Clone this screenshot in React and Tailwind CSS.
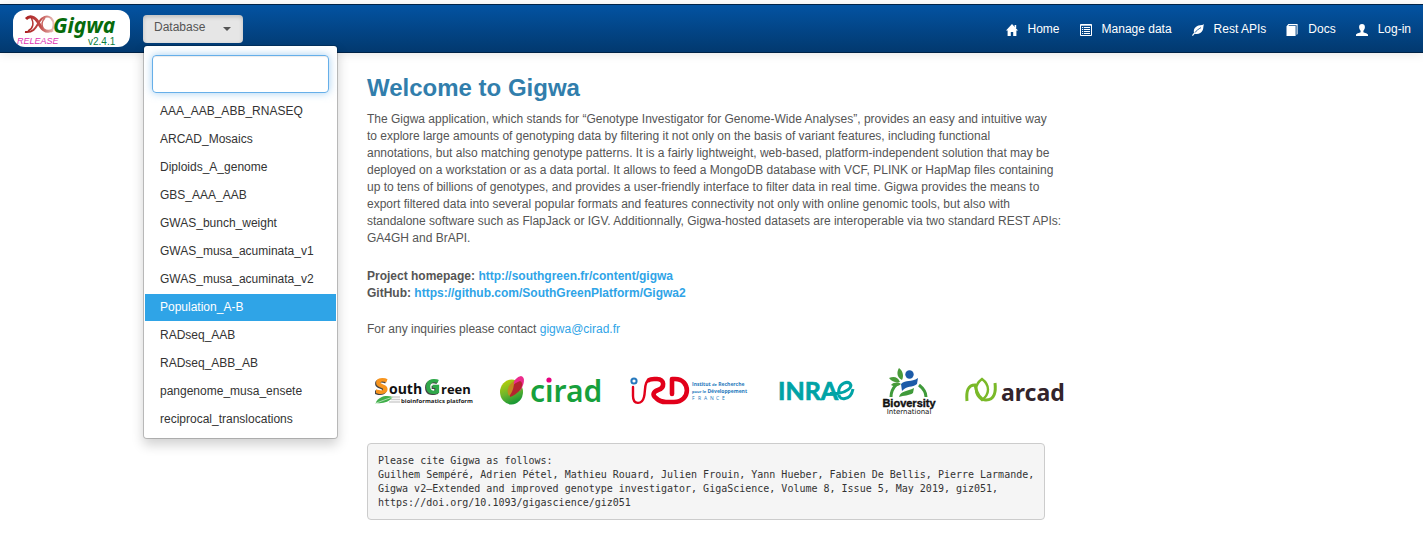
import React, { useState } from "react";

const DATABASES = [
  "AAA_AAB_ABB_RNASEQ",
  "ARCAD_Mosaics",
  "Diploids_A_genome",
  "GBS_AAA_AAB",
  "GWAS_bunch_weight",
  "GWAS_musa_acuminata_v1",
  "GWAS_musa_acuminata_v2",
  "Population_A-B",
  "RADseq_AAB",
  "RADseq_ABB_AB",
  "pangenome_musa_ensete",
  "reciprocal_translocations",
];

const HomeIcon = () => (
  <svg viewBox="0 0 12 12" className="size-3" fill="currentColor" aria-hidden="true">
    <path d="M6 0 L12 6.4 H10.4 V12 H7.2 V8 H4.8 V12 H1.6 V6.4 H0 Z" />
    <path d="M8.6 1 H10.2 V4 H8.6 Z" />
  </svg>
);

const ListIcon = () => (
  <svg viewBox="0 0 12 12" className="size-3" aria-hidden="true">
    <path d="M0.5 0.5 H11.5 V11.5 H0.5 Z M0.5 1.2 H11.5" fill="none" stroke="currentColor" />
    <path
      d="M2 3.5 H3.2 M4 3.5 H10 M2 5.5 H3.2 M4 5.5 H10 M2 7.5 H3.2 M4 7.5 H10 M2 9.5 H3.2 M4 9.5 H10"
      stroke="currentColor"
      fill="none"
    />
  </svg>
);

const LeafIcon = () => (
  <svg viewBox="0 0 12 12" className="size-3" aria-hidden="true">
    <path
      d="M12 0 C11 1.2 9 0.8 6.5 1.6 C3 2.8 1.3 5.4 2 8.8 C1.3 9.8 0.6 10.6 0 11.2 L0.9 11.9 C1.6 11.2 2.2 10.6 2.8 9.8 C6 10.4 9.4 9.6 10.8 6 C11.6 4 11.2 2 12 0 Z"
      fill="currentColor"
    />
    <path d="M3 8.6 C4.4 6.4 6.2 5.4 9 3.6" fill="none" stroke="#04478a" strokeWidth="0.8" />
  </svg>
);

const BookIcon = () => (
  <svg viewBox="0 0 12 12" className="size-3" aria-hidden="true">
    <path d="M0.5 2.2 L2.4 0 H11.6 V10 L10.6 11 V1.2 H3 L2.4 2 H9.6 V12 H0.5 Z" fill="currentColor" />
  </svg>
);

const UserIcon = () => (
  <svg viewBox="0 0 12 12" className="size-3" fill="currentColor" aria-hidden="true">
    <path d="M6 0 C7.9 0 8.9 1.3 8.9 3.1 C8.9 4.7 8.2 5.9 7.4 6.7 V8.2 C8.6 9 11.8 9.4 12 10.8 V12 H0 V10.8 C0.2 9.4 3.4 9 4.6 8.2 V6.7 C3.8 5.9 3.1 4.7 3.1 3.1 C3.1 1.3 4.1 0 6 0 Z" />
  </svg>
);

const NAV = [
  { label: "Home", Icon: HomeIcon },
  { label: "Manage data", Icon: ListIcon },
  { label: "Rest APIs", Icon: LeafIcon },
  { label: "Docs", Icon: BookIcon },
  { label: "Log-in", Icon: UserIcon },
];

const GigwaLogo = () => (
  <svg viewBox="0 0 117 37" className="h-[37px] w-[117px]" role="img" aria-label="Gigwa release v2.4.1">
    <defs>
      <linearGradient id="helix" gradientUnits="userSpaceOnUse" x1="12" x2="42" y1="0" y2="0">
        <stop offset="0" stopColor="#a81e1e" />
        <stop offset="0.5" stopColor="#c04a48" />
        <stop offset="1" stopColor="#ecc9c4" />
      </linearGradient>
    </defs>
    <g fill="none" stroke="url(#helix)">
      <path d="M13 9 C17 5 22 7 25 12 C28 18 32 24 40 20" strokeWidth="3" />
      <path d="M12 22 C21 23 23 17 26 12 C29 7 34 5 38 8 C42 12 41 18 38 22" strokeWidth="2" />
      <path d="M15 21 C21 18 21 13 18 7 M30 18 C28 14 29 11 32 8" strokeWidth="1.4" />
    </g>
    <text x="40" y="23" fontFamily="Noto Sans, sans-serif" fontSize="21" fontWeight="700" fontStyle="italic" fill="#066b0b">
      Gigwa
    </text>
    <text x="4" y="34" fontFamily="Liberation Sans, sans-serif" fontSize="9" fontStyle="italic" fill="#e032b0">
      RELEASE
    </text>
    <text x="75" y="35" fontFamily="Liberation Sans, sans-serif" fontSize="10" fill="#0a7d3c">
      v2.4.1
    </text>
  </svg>
);

const SouthGreenLogo = () => (
  <svg viewBox="0 0 99 30" className="h-[30px] w-[99px] overflow-visible" role="img" aria-label="SouthGreen bioinformatics platform">
    <g fontFamily="Open Sans, sans-serif" fontWeight="800" className="drop-shadow-[-1px_1px_0_#444]">
      <text x="1" y="18" fontSize="23" fill="#f7941d">S</text>
      <text x="51" y="18" fontSize="21" fill="#2fa84a">G</text>
    </g>
    <g fontFamily="Open Sans, sans-serif" fontWeight="700" fill="#111">
      <text x="15" y="18" fontSize="14">outh</text>
      <text x="67" y="18" fontSize="13">reen</text>
    </g>
    <path d="M2 26 C6 20 12 19 19 21 C15 26 9 28 2 27 Z" fill="#3fae49" />
    <path d="M1 27.5 C8 25 12 23 18 21.5" stroke="#c5e6c8" strokeWidth="0.8" fill="none" />
    <path d="M18 21 H26 M17 23.5 H26 M15 26 H26" stroke="#cfcfcf" strokeWidth="1.4" />
    <text x="27" y="27" fontFamily="Liberation Sans Narrow, Open Sans, sans-serif" fontSize="6" fontWeight="700" fill="#222">
      bioinformatics platform
    </text>
  </svg>
);

const CiradLogo = () => (
  <svg viewBox="0 0 102 30" className="h-[30px] w-[102px] overflow-visible" role="img" aria-label="cirad">
    <defs>
      <linearGradient id="fruit" x1="0" y1="0" x2="0.4" y2="1">
        <stop offset="0" stopColor="#c6d400" />
        <stop offset="0.6" stopColor="#6db52c" />
        <stop offset="1" stopColor="#1d9a35" />
      </linearGradient>
    </defs>
    <ellipse cx="11.5" cy="16" rx="11.5" ry="12.5" fill="url(#fruit)" />
    <path d="M13 8 C14 4 17 1 21 0 C26 1 24 9 20 15 Z" fill="#ec2b8c" />
    <path d="M10 21 C9 12 14 7 20 5 C25 7 21 17 10 21 Z" fill="#b5252f" />
    <path d="M9 20 C6 15 8 9 14 5 C14 10 13 16 9 20 Z" fill="#c28a1e" />
    <text x="30" y="26" fontFamily="Noto Sans, sans-serif" fontSize="30" fontWeight="600" fill="#17a03c">
      cırad
    </text>
    <circle cx="49" cy="4" r="2.6" fill="#e6007e" />
  </svg>
);

const IrdLogo = () => (
  <svg viewBox="0 0 121 30" className="h-[30px] w-[121px] overflow-visible" role="img" aria-label="IRD Institut de Recherche pour le Développement France">
    <circle cx="4" cy="5" r="2.6" fill="none" stroke="#2779bd" strokeWidth="2" />
    <g fill="none" stroke="#e2001a" strokeLinecap="round" strokeLinejoin="round">
      <path d="M3 11 V20 C3 29 12 29 14 21 C16 14 13 4 22 3" strokeWidth="2.4" />
      <path d="M19 4 C21 2.500 24 3 27 3 C35 3 35 12 28 14 C23 16 22 19 26 22 C29 25 31 26 36 26 H44 C61 26 61 3 45 3 H42 V18" strokeWidth="4.6" />
    </g>
    <g fontFamily="Open Sans, sans-serif" fill="#2779bd" fontWeight="700">
      <text x="62" y="10" fontSize="5">
        Institut <tspan fontSize="4">de</tspan> Recherche
      </text>
      <text x="62" y="17" fontSize="5">
        <tspan fontSize="4">pour le</tspan> Développement
      </text>
      {["F", "R", "A", "N", "C", "E"].map((letter, i) => (
        <text key={letter} x={62 + i * 6} y="24" fontSize="5" fontWeight="400">
          {letter}
        </text>
      ))}
    </g>
  </svg>
);

const InraeLogo = () => (
  <svg viewBox="0 0 77 24" className="h-6 w-[77px] overflow-visible" role="img" aria-label="INRAE">
    <text x="0" y="21" fontFamily="Lato, sans-serif" fontSize="25" fontWeight="700" fill="#00a3a6" stroke="#00a3a6" strokeWidth="0.7">
      INRA
    </text>
    <path
      d="M52 14.500 H60 C68 13.500 75 8.500 72 4.500 C69 2 62.500 4 61 10 C59.500 17 62 20.500 67 19.500 C71 19 74 15 75 10"
      fill="none"
      stroke="#00a3a6"
      strokeWidth="3"
    />
  </svg>
);

const BioversityLogo = () => (
  <svg viewBox="0 0 54 46" className="h-[46px] w-[54px] overflow-visible" role="img" aria-label="Bioversity International">
    <circle cx="26.5" cy="6.500" r="4.200" fill="#1c5ba8" />
    <path d="M19 12 C13 9 14 3 16 0 C20 3 21 8 19 12 Z M17 14 C13 15 9 14 6 10 C11 8 15 9 17 14 Z M18 16 C15 19 11 19 8 17 C11 14 15 14 18 16 Z" fill="#4a9b3a" />
    <path d="M18 16 C23 11 28 15 35 10 L34 16 C29 20 24 17 19 23 Z" fill="#1c5ba8" />
    <path d="M16 29 C18 22 24 24 31 20 L30 25 C26 28 21 27 16 29 Z" fill="#3f9a3a" />
    <path d="M13 17 C9 21 8 25 8 29 M36 17 C41 21 43 25 43 29" fill="none" stroke="#3f9a3a" strokeWidth="3" />
    <text x="26" y="39" textAnchor="middle" fontFamily="Liberation Sans, sans-serif" fontSize="11" fontWeight="700" fill="#111" stroke="#111" strokeWidth="0.4">
      Bioversity
    </text>
    <text x="26" y="46" textAnchor="middle" fontFamily="DejaVu Sans, sans-serif" fontSize="7" fill="#111">
      International
    </text>
  </svg>
);

const ArcadLogo = () => (
  <svg viewBox="0 0 97 28" className="h-7 w-[97px] overflow-visible" role="img" aria-label="arcad">
    <g fill="none" stroke="#7ab929" strokeWidth="3">
      <path d="M3 24 C2 14 4 8 11 8 C13 17 17 23 22 23 C31 23 32 14 31 6" />
      <path d="M18 2 C10 8 10 17 18 23 C26 17 26 8 18 2 Z" strokeWidth="2.4" />
    </g>
    <text x="37" y="24" fontFamily="Noto Sans, sans-serif" fontSize="23" fontWeight="700" fill="#33242b">
      arcad
    </text>
  </svg>
);

const INTRO = [
  "The Gigwa application, which stands for “Genotype Investigator for Genome-Wide Analyses”, provides an easy and intuitive way",
  "to explore large amounts of genotyping data by filtering it not only on the basis of variant features, including functional",
  "annotations, but also matching genotype patterns. It is a fairly lightweight, web-based, platform-independent solution that may be",
  "deployed on a workstation or as a data portal. It allows to feed a MongoDB database with VCF, PLINK or HapMap files containing",
  "up to tens of billions of genotypes, and provides a user-friendly interface to filter data in real time. Gigwa provides the means to",
  "export filtered data into several popular formats and features connectivity not only with online genomic tools, but also with",
  "standalone software such as FlapJack or IGV. Additionnally, Gigwa-hosted datasets are interoperable via two standard REST APIs:",
  "GA4GH and BrAPI.",
];

function Header({ selected, onSelect }) {
  const [query, setQuery] = useState("");
  return (
    <header className="flex h-[49px] items-center justify-between border-y border-[#002347] bg-linear-to-b from-[#0353a2] to-[#02396f] pr-3 pl-[13px] shadow-[0_1px_10px_rgba(0,0,0,0.1)]">
      <div className="flex items-center gap-[13px]">
        <a href="#home" className="rounded-xl bg-white">
          <GigwaLogo />
        </a>
        <div className="relative">
          <button
            type="button"
            aria-expanded="true"
            className="flex h-7 w-[100px] items-center justify-between rounded-sm bg-[#e6e6e6] px-[11px] pb-[3px] text-[#555] shadow-[inset_0_2px_4px_rgba(0,0,0,0.18)]"
          >
            Database
            <svg viewBox="0 0 8 4" className="mt-1 mr-px h-1 w-2" fill="#555" aria-hidden="true">
              <path d="M0 0 H8 L4 4 Z" />
            </svg>
          </button>
          <div className="absolute top-full left-0 z-10 mt-[2px] w-[195px] rounded-[4px] border border-black/20 bg-white bg-clip-padding pt-[9px] pb-1 shadow-[0_6px_12px_rgba(0,0,0,0.18)]">
            <div className="px-2 pb-[5px]">
              <input
                type="text"
                aria-label="Search databases"
                value={query}
                onChange={(e) => setQuery(e.target.value)}
                className="block h-[38px] w-full rounded-[4px] border border-[#66afe9] px-3 shadow-[inset_0_1px_1px_rgba(0,0,0,0.08),0_0_8px_rgba(102,175,233,0.6)] outline-none"
              />
            </div>
            <ul>
              {DATABASES.filter((name) => name.toLowerCase().includes(query.toLowerCase())).map((name) => (
                <li key={name} className="px-px pb-px">
                  <button
                    type="button"
                    onClick={() => onSelect(name)}
                    className={
                      name === selected
                        ? "block h-[27px] w-full bg-[#2fa4e7] px-[15px] text-left text-white"
                        : "block h-[27px] w-full px-[15px] text-left text-[#333]"
                    }
                  >
                    {name}
                  </button>
                </li>
              ))}
            </ul>
          </div>
        </div>
      </div>
      <nav className="flex gap-5 pt-[2px] text-white">
        {NAV.map(({ label, Icon }) => (
          <a key={label} href={"#" + label} className="flex items-center gap-[10px]">
            <Icon />
            {label}
          </a>
        ))}
      </nav>
    </header>
  );
}

export default function App() {
  const [selected, setSelected] = useState("Population_A-B");
  return (
    <div className="bg-white pt-1 font-['Liberation_Sans',Arial,sans-serif] text-[12px] leading-[17px] text-[#555]">
      <Header selected={selected} onSelect={setSelected} />
      <main className="pt-5 pr-4 pb-6 pl-[367px]">
        <div className="max-w-[702px]">
          <h1 className="text-[24px] leading-[30px] font-bold text-[#317eac]">Welcome to Gigwa</h1>
          <p className="mt-2">
            {INTRO.map((line) => (
              <React.Fragment key={line}>
                {line}
                <br />
              </React.Fragment>
            ))}
          </p>
          <p className="mt-[21px] font-bold">
            Project homepage:{" "}
            <a href="http://southgreen.fr/content/gigwa" className="text-[#2fa4e7]">
              http://southgreen.fr/content/gigwa
            </a>
            <br />
            GitHub:{" "}
            <a href="https://github.com/SouthGreenPlatform/Gigwa2" className="text-[#2fa4e7]">
              https://github.com/SouthGreenPlatform/Gigwa2
            </a>
          </p>
          <p className="mt-[19px]">
            For any inquiries please contact{" "}
            <a href="mailto:gigwa@cirad.fr" className="text-[#2fa4e7]">
              gigwa@cirad.fr
            </a>
          </p>
          <div className="mt-[30px] flex items-center justify-between pr-2 pl-[7px]">
            <SouthGreenLogo />
            <CiradLogo />
            <IrdLogo />
            <InraeLogo />
            <BioversityLogo />
            <ArcadLogo />
          </div>
          <pre className="mt-[29px] w-fit rounded-[4px] border border-[#ccc] bg-[#f5f5f5] px-[10px] pt-[10px] pb-[9px] font-['DejaVu_Sans_Mono',monospace] text-[10px] leading-[14px] text-[#333]">
            {`Please cite Gigwa as follows:
Guilhem Sempéré, Adrien Pétel, Mathieu Rouard, Julien Frouin, Yann Hueber, Fabien De Bellis, Pierre Larmande,
Gigwa v2–Extended and improved genotype investigator, GigaScience, Volume 8, Issue 5, May 2019, giz051,
https://doi.org/10.1093/gigascience/giz051`}
          </pre>
        </div>
      </main>
    </div>
  );
}
